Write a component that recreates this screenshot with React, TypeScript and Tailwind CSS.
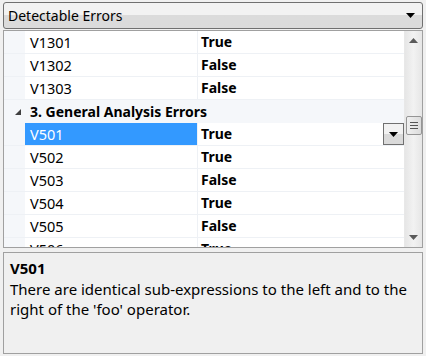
import React from 'react';

const rowsTop = [
  { id: 'V1301', value: 'True' },
  { id: 'V1302', value: 'False' },
  { id: 'V1303', value: 'False' },
];

const rowsBottom = [
  { id: 'V501', value: 'True', selected: true },
  { id: 'V502', value: 'True' },
  { id: 'V503', value: 'False' },
  { id: 'V504', value: 'True' },
  { id: 'V505', value: 'False' },
  { id: 'V506', value: 'True' },
];

function Triangle({ down = true, color = '#000' }: { down?: boolean; color?: string }) {
  return (
    <svg width="9" height="5" viewBox="0 0 9 5">
      {down ? <path d="M0 0 H9 L4.5 5 Z" fill={color} /> : <path d="M0 5 H9 L4.5 0 Z" fill={color} />}
    </svg>
  );
}

function Row({ id, value, selected }: { id: string; value: string; selected?: boolean }) {
  return (
    <div className="flex h-[23px] border-b border-[#eef1f5]">
      <div className="w-[21px] shrink-0 bg-[#f5f7fa]" />
      <div
        className={
          selected
            ? 'w-[173px] shrink-0 bg-[#3399ff] text-white pl-[5px] flex items-center border-r border-[#eef1f5] text-[14.5px]'
            : 'w-[173px] shrink-0 bg-white pl-[5px] flex items-center border-r border-[#eef1f5] text-[14.5px]'
        }
      >
        {id}
      </div>
      <div className="flex-1 bg-white pl-[3px] flex items-center font-bold relative">
        {value}
        {selected && (
          <div className="absolute right-0 top-0 w-[21px] h-[22px] border border-[#707070] bg-gradient-to-b from-[#f2f2f2] from-50% to-[#dadada] to-50% flex items-center justify-center">
            <Triangle />
          </div>
        )}
      </div>
    </div>
  );
}

export default function App() {
  return (
    <div
      className="w-[426px] h-[356px] bg-[#f0f0f0] text-[14px] text-black leading-none overflow-hidden"
      style={{ fontFamily: '"Noto Sans", "Open Sans", sans-serif' }}
    >
      {/* Combo box */}
      <div className="mx-[3px] mt-[2px] h-[27px] rounded-[3px] border border-[#707070] bg-gradient-to-b from-[#f2f2f2] from-50% to-[#dbdbdb] to-50% flex items-center justify-between pl-[4px] pr-[7px]">
        <span>Detectable Errors</span>
        <Triangle />
      </div>

      {/* Property grid */}
      <div className="mx-[3px] mt-[1px] h-[218px] border border-[#a0a0a0] flex overflow-hidden">
        <div className="flex-1 overflow-hidden">
          {rowsTop.map((r) => (
            <Row key={r.id} {...r} />
          ))}
          <div className="h-[23px] bg-[#f5f7fa] flex items-center font-bold">
            <div className="w-[26px] flex justify-center pl-[2px]">
              <svg width="6" height="6" viewBox="0 0 6 6">
                <path d="M6 0 V6 H0 Z" fill="#404040" />
              </svg>
            </div>
            <span>3. General Analysis Errors</span>
          </div>
          {rowsBottom.map((r) => (
            <Row key={r.id} {...r} />
          ))}
        </div>
        {/* Scrollbar */}
        <div className="w-[18px] shrink-0 bg-gradient-to-r from-[#e6e6e6] via-[#f2f2f2] to-[#e6e6e6] border-l border-[#e8e8e8] flex flex-col items-center">
          <div className="h-[16px] flex items-center justify-center mt-[1px]">
            <Triangle down={false} color="#5a5a5a" />
          </div>
          <div className="mt-[68px] w-[16px] h-[19px] rounded-[2px] border border-[#959595] bg-gradient-to-r from-[#f0f0f0] to-[#dcdcdc] flex flex-col items-center justify-center gap-[2px]">
            <div className="w-[8px] h-[1px] bg-[#555]" />
            <div className="w-[8px] h-[1px] bg-[#555]" />
            <div className="w-[8px] h-[1px] bg-[#555]" />
          </div>
          <div className="flex-1" />
          <div className="h-[16px] flex items-center justify-center mb-[2px]">
            <Triangle color="#5a5a5a" />
          </div>
        </div>
      </div>

      {/* Description */}
      <div className="mx-[3px] mt-[4px] h-[102px] border border-[#a0a0a0] bg-[#f0f0f0] px-[6px] pt-[5px]">
        <div className="font-bold text-[15px] leading-[20px]">V501</div>
        <div className="text-[15px] leading-[20px] mt-[1px]">
          There are identical sub-expressions to the left and to the right of the 'foo' operator.
        </div>
      </div>
    </div>
  );
}
